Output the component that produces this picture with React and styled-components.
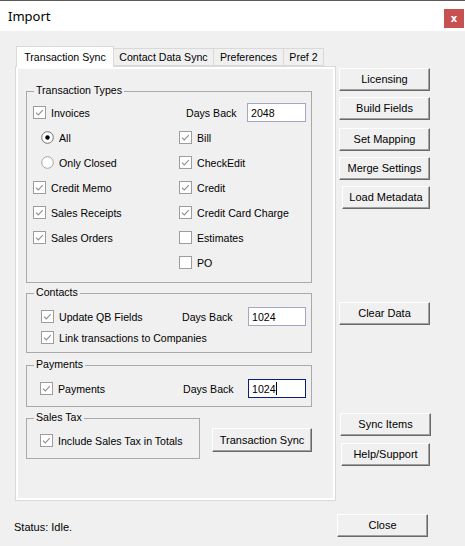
import React from "react";
import styled, { createGlobalStyle } from "styled-components";

const GlobalStyle = createGlobalStyle`
  html, body {
    margin: 0;
    padding: 0;
    background: #f0f0f0;
  }
  body {
    font-family: "Liberation Sans", Arial, sans-serif;
    font-size: 11px;
    color: #000;
  }
  * {
    box-sizing: border-box;
  }
`;

const Window = styled.div`
  width: 465px;
  height: 546px;
  display: flex;
  flex-direction: column;
  background: #f0f0f0;
  overflow: hidden;
`;

const TitleBar = styled.div`
  height: 31px;
  flex: none;
  background: #fff;
  border-top: 1px solid #5a5a5a;
  display: flex;
  align-items: center;
  justify-content: space-between;
  padding-left: 8px;
`;

const Title = styled.span`
  font-family: "Noto Sans", sans-serif;
  font-size: 13px;
  color: #000;
`;

const CloseBox = styled.div`
  align-self: flex-start;
  margin-top: 8px;
  margin-right: 1px;
  width: 20px;
  height: 19px;
  background: #c75050;
  color: #fff;
  font-family: "DejaVu Sans", sans-serif;
  font-weight: bold;
  font-size: 10px;
  display: flex;
  align-items: center;
  justify-content: center;
`;

const Main = styled.div`
  height: 470px;
  flex: none;
  display: flex;
  padding: 15px 0 0 15px;
`;

const LeftCol = styled.div`
  width: 321px;
  display: flex;
  flex-direction: column;
`;

const TabStrip = styled.div`
  display: flex;
  align-items: flex-end;
  height: 20px;
  padding-left: 1px;
`;

const Tab = styled.div`
  position: relative;
  z-index: ${(p) => (p.$active ? 2 : 1)};
  width: ${(p) => p.$w}px;
  height: ${(p) => (p.$active ? 21 : 18)}px;
  margin-bottom: ${(p) => (p.$active ? -1 : 0)}px;
  margin-left: ${(p) => (p.$first ? 0 : -1)}px;
  background: ${(p) => (p.$active ? "#fff" : "#f0f0f0")};
  border: 1px solid #d9d9d9;
  border-bottom: ${(p) => (p.$active ? "none" : "1px solid #d9d9d9")};
  font-size: 10.6px;
  display: flex;
  align-items: center;
  justify-content: center;
  white-space: nowrap;
`;

const Panel = styled.div`
  width: 321px;
  height: 435px;
  border: 1px solid #d9d9d9;
  box-shadow: inset 0 0 0 2px #fff;
  padding: 24px 0 0 10px;
  display: flex;
  flex-direction: column;
`;

const Group = styled.div`
  position: relative;
  flex: none;
  width: ${(p) => p.$w || 286}px;
  height: ${(p) => p.$h}px;
  margin-top: ${(p) => p.$mt || 0}px;
  border: 1px solid #a9a9a9;
  padding: ${(p) => p.$pad};
`;

const GroupTitle = styled.span`
  position: absolute;
  top: -8px;
  left: 7px;
  padding: 0 2px;
  line-height: 13px;
  font-size: 10.6px;
  background: #f0f0f0;
  white-space: nowrap;
`;

const TypeGrid = styled.div`
  display: grid;
  grid-template-columns: 146px 1fr;
  grid-auto-flow: column;
  grid-template-rows: repeat(7, 25px);
`;

const Row = styled.div`
  display: flex;
  align-items: center;
  height: ${(p) => p.$h || 25}px;
  padding-left: ${(p) => p.$indent || 0}px;
`;

const Option = styled.label`
  display: flex;
  align-items: center;
  gap: 5px;
  font-size: 10.6px;
  white-space: nowrap;
  width: ${(p) => (p.$w ? `${p.$w}px` : "auto")};
`;

const FieldLabel = styled.span`
  font-size: 10.6px;
  white-space: nowrap;
  width: ${(p) => p.$w}px;
  padding-left: ${(p) => p.$pl || 0}px;
`;

const TextBox = styled.div`
  width: ${(p) => p.$w || 58}px;
  height: 19px;
  background: #fff;
  border: 1px solid ${(p) => (p.$focused ? "#0b1f74" : "#a6a6c2")};
  padding: 0 3px;
  font-size: 10.6px;
  display: flex;
  align-items: center;
`;

const Caret = styled.span`
  display: inline-block;
  width: 1px;
  height: 13px;
  background: #000;
`;

const BottomRow = styled.div`
  display: flex;
  align-items: flex-start;
  gap: 12px;
  margin-top: 11px;
`;

const RightCol = styled.div`
  display: flex;
  flex-direction: column;
  align-items: flex-start;
  margin-left: 3px;
`;

const Button = styled.button`
  flex: none;
  width: ${(p) => p.$w || 91}px;
  height: ${(p) => p.$h || 23}px;
  margin-top: ${(p) => p.$mt || 0}px;
  margin-left: ${(p) => p.$ml || 0}px;
  padding: 0 0 1px;
  background: #f0f0f0;
  border: 1px solid;
  border-color: #fff #696969 #696969 #fff;
  box-shadow: inset -1px -1px 0 #a0a0a0;
  font-family: "Liberation Sans", Arial, sans-serif;
  font-size: 11px;
  color: #000;
  white-space: nowrap;
`;

const Footer = styled.div`
  flex: 1;
  display: flex;
  align-items: flex-start;
  padding: 13px 0 0 14px;
`;

const Status = styled.span`
  margin-top: 7px;
  font-size: 11px;
`;

const CloseButton = styled(Button)`
  margin-left: auto;
  margin-right: 37px;
`;

function CheckBox({ checked }) {
  return (
    <svg width="13" height="13" viewBox="0 0 13 13">
      <rect x="0.5" y="0.5" width="12" height="12" fill="#fff" stroke="#9d9d9d" />
      {checked && (
        <path d="M3 6.6 L5.3 8.9 L9.8 4.2" fill="none" stroke="#8f8f8f" strokeWidth="1.1" />
      )}
    </svg>
  );
}

function RadioDot({ on }) {
  return (
    <svg width="13" height="13" viewBox="0 0 13 13">
      <circle cx="6.5" cy="6.5" r="5.8" fill="#fff" stroke={on ? "#6e6e6e" : "#a3a3a3"} />
      {on && <circle cx="6.5" cy="6.5" r="2.2" fill="#000" />}
    </svg>
  );
}

function Check({ label, checked = true, w }) {
  return (
    <Option $w={w}>
      <CheckBox checked={checked} />
      {label}
    </Option>
  );
}

function Radio({ label, on }) {
  return (
    <Option>
      <RadioDot on={on} />
      {label}
    </Option>
  );
}

const tabs = [
  { label: "Transaction Sync", w: 98 },
  { label: "Contact Data Sync", w: 101 },
  { label: "Preferences", w: 71 },
  { label: "Pref 2", w: 41 },
];

export default function App() {
  return (
    <Window>
      <GlobalStyle />
      <TitleBar>
        <Title>Import</Title>
        <CloseBox>x</CloseBox>
      </TitleBar>

      <Main>
        <LeftCol>
          <TabStrip>
            {tabs.map((t, i) => (
              <Tab key={t.label} $w={t.w} $first={i === 0} $active={i === 0}>
                {t.label}
              </Tab>
            ))}
          </TabStrip>
          <Panel>
            <Group $h={192} $pad="8px 0 0 6px">
              <GroupTitle>Transaction Types</GroupTitle>
              <TypeGrid>
                <Row><Check label="Invoices" /></Row>
                <Row $indent={8}><Radio label="All" on /></Row>
                <Row $indent={8}><Radio label="Only Closed" /></Row>
                <Row><Check label="Credit Memo" /></Row>
                <Row><Check label="Sales Receipts" /></Row>
                <Row><Check label="Sales Orders" /></Row>
                <Row />
                <Row>
                  <FieldLabel $w={68} $pl={7}>Days Back</FieldLabel>
                  <TextBox $w={59}>2048</TextBox>
                </Row>
                <Row><Check label="Bill" /></Row>
                <Row><Check label="CheckEdit" /></Row>
                <Row><Check label="Credit" /></Row>
                <Row><Check label="Credit Card Charge" /></Row>
                <Row><Check label="Estimates" checked={false} /></Row>
                <Row><Check label="PO" checked={false} /></Row>
              </TypeGrid>
            </Group>

            <Group $h={60} $mt={10} $pad="12px 0 0 14px">
              <GroupTitle>Contacts</GroupTitle>
              <Row $h={21}>
                <Check label="Update QB Fields" w={141} />
                <FieldLabel $w={66}>Days Back</FieldLabel>
                <TextBox>1024</TextBox>
              </Row>
              <Row $h={21}>
                <Check label="Link transactions to Companies" />
              </Row>
            </Group>

            <Group $h={42} $mt={12} $pad="12px 0 0 13px">
              <GroupTitle>Payments</GroupTitle>
              <Row $h={21}>
                <Check label="Payments" w={143} />
                <FieldLabel $w={65}>Days Back</FieldLabel>
                <TextBox $focused>
                  1024
                  <Caret />
                </TextBox>
              </Row>
            </Group>

            <BottomRow>
              <Group $w={174} $h={41} $pad="11px 0 0 13px">
                <GroupTitle>Sales Tax</GroupTitle>
                <Row $h={21}>
                  <Check label="Include Sales Tax in Totals" />
                </Row>
              </Group>
              <Button $w={100} $h={24} $mt={10}>Transaction Sync</Button>
            </BottomRow>
          </Panel>
        </LeftCol>

        <RightCol>
          <Button $mt={22}>Licensing</Button>
          <Button $mt={6}>Build Fields</Button>
          <Button $mt={8}>Set Mapping</Button>
          <Button $mt={6}>Merge Settings</Button>
          <Button $mt={6} $ml={3} $w={88}>Load Metadata</Button>
          <Button $mt={93}>Clear Data</Button>
          <Button $mt={88} $ml={1}>Sync Items</Button>
          <Button $mt={7} $ml={2} $w={89}>Help/Support</Button>
        </RightCol>
      </Main>

      <Footer>
        <Status>Status: Idle.</Status>
        <CloseButton $w={91}>Close</CloseButton>
      </Footer>
    </Window>
  );
}
